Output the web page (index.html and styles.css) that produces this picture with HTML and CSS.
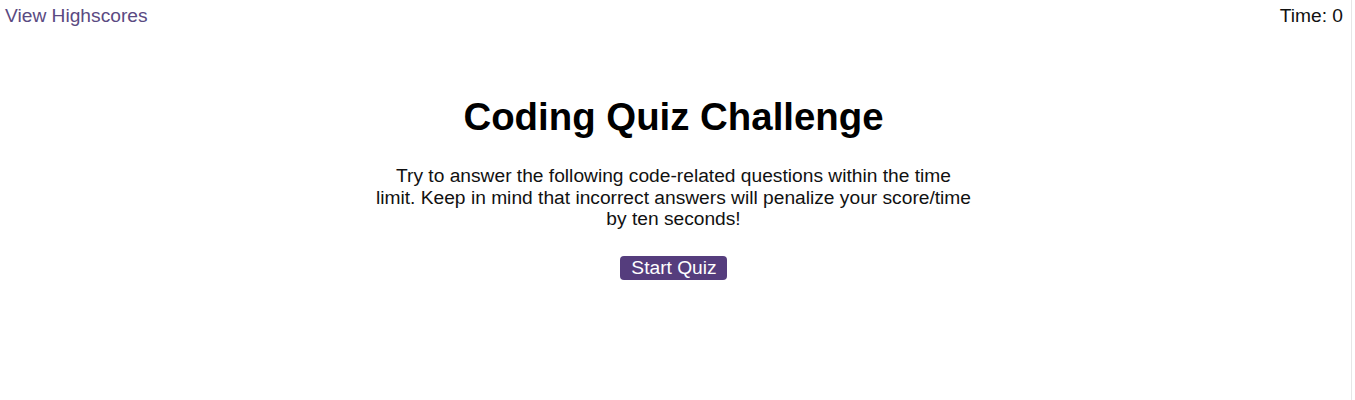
FILE: index.html
```html
<!DOCTYPE html>
<html lang="en">
<head>
<meta charset="utf-8">
<title>Coding Quiz Challenge</title>
<link rel="stylesheet" href="styles.css">
</head>
<body>
<div class="page">
  <header class="topbar">
    <a class="highscores" href="#">View Highscores</a>
    <div class="timer">Time: <span>0</span></div>
  </header>
  <main class="intro">
    <h1 class="title">Coding Quiz Challenge</h1>
    <p class="desc">Try to answer the following code-related questions within the time limit. Keep in mind that incorrect answers will penalize your score/time by ten seconds!</p>
    <button class="start" type="button">Start Quiz</button>
  </main>
</div>
</body>
</html>
```

FILE: styles.css
```css
html, body {
  margin: 0;
  padding: 0;
  background: #ffffff;
}
body {
  font-family: "Liberation Sans", Arial, sans-serif;
  font-size: 19.2px;
  color: #111111;
}
.page {
  width: 1352px;
  height: 400px;
  box-sizing: border-box;
  border-right: 1px solid #e6e6e6;
}
.topbar {
  display: flex;
  justify-content: space-between;
  align-items: flex-start;
  padding: 5px 8px 0 5px;
}
.highscores {
  color: #5a4a82;
  text-decoration: none;
}
.timer {
  color: #111111;
}
.intro {
  width: 597px;
  margin: 0 auto;
  padding-right: 4px;
  text-align: center;
}
.title {
  font-size: 38.4px;
  font-weight: bold;
  color: #000000;
  margin: 68px 0 0;
}
.desc {
  margin: 26px 0 0;
  line-height: 21.5px;
}
.start {
  margin-top: 26px;
  font-family: inherit;
  font-size: 19.2px;
  color: #ffffff;
  background: #553d7d;
  border: none;
  border-radius: 4px;
  padding: 1px 10px 1px 11px;
  line-height: 22px;
}
```
